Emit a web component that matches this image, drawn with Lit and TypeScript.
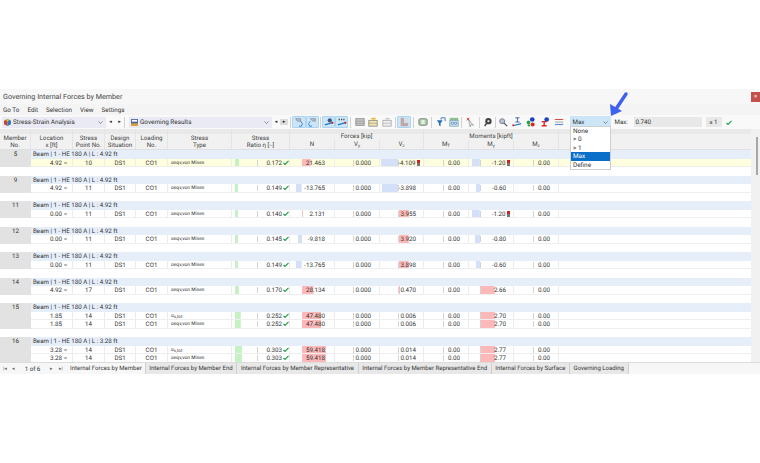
import { LitElement, html, css, svg } from 'lit';
import { customElement } from 'lit/decorators.js';

type Row = {
  loc: string; approx: boolean; pt: string; type: string; ratio: string;
  n: string; vz: string; vzFlag?: boolean; my: string; myFlag?: boolean;
};
type Group = { no: string; len: string; yellow?: boolean; rows: Row[] };

const VM = 'von';
const TOT = 'tot';

const groups: Group[] = [
  { no: '5', len: '4.92', yellow: true, rows: [{ loc: '4.92', approx: true, pt: '10', type: VM, ratio: '0.172', n: '21.463', vz: '-4.109', vzFlag: true, my: '-1.20', myFlag: true }] },
  { no: '9', len: '4.92', rows: [{ loc: '4.92', approx: true, pt: '11', type: VM, ratio: '0.149', n: '-13.765', vz: '-3.898', my: '-0.60' }] },
  { no: '11', len: '4.92', rows: [{ loc: '0.00', approx: true, pt: '11', type: VM, ratio: '0.140', n: '2.131', vz: '3.955', my: '-1.20', myFlag: true }] },
  { no: '12', len: '4.92', rows: [{ loc: '0.00', approx: true, pt: '11', type: VM, ratio: '0.145', n: '-9.818', vz: '3.920', my: '-0.80' }] },
  { no: '13', len: '4.92', rows: [{ loc: '0.00', approx: true, pt: '11', type: VM, ratio: '0.149', n: '-13.765', vz: '3.898', my: '-0.60' }] },
  { no: '14', len: '4.92', rows: [{ loc: '4.92', approx: true, pt: '17', type: VM, ratio: '0.170', n: '28.134', vz: '0.470', my: '2.66' }] },
  { no: '15', len: '4.92', rows: [
    { loc: '1.85', approx: false, pt: '14', type: TOT, ratio: '0.252', n: '47.480', vz: '0.006', my: '2.70' },
    { loc: '1.85', approx: false, pt: '14', type: VM, ratio: '0.252', n: '47.480', vz: '0.006', my: '2.70' },
  ] },
  { no: '16', len: '3.28', rows: [
    { loc: '3.28', approx: true, pt: '14', type: TOT, ratio: '0.303', n: '59.418', vz: '0.014', my: '2.77' },
    { loc: '3.28', approx: true, pt: '14', type: VM, ratio: '0.303', n: '59.418', vz: '0.014', my: '2.77' },
  ] },
];

const tabs = [
  'Internal Forces by Member',
  'Internal Forces by Member End',
  'Internal Forces by Member Representative',
  'Internal Forces by Member Representative End',
  'Internal Forces by Surface',
  'Governing Loading',
];

// signed bar around a zero line: red to the right, blue to the left
function bar(value: number, zero: number, scalePos: number, scaleNeg: number) {
  const w = value >= 0 ? value * scalePos : -value * scaleNeg;
  const left = value >= 0 ? zero : zero - w;
  const color = value >= 0 ? '#fdb9b9' : '#d3e0f8';
  return `--bx:${left}px;--bw:${w}px;--bc:${color}`;
}

const tool = (body: unknown, cls = '') =>
  html`<span class="tool ${cls}"><svg viewBox="0 0 12 12" width="10" height="10">${body}</svg></span>`;

const check = html`<svg width="6" height="5" viewBox="0 0 6 5"><path d="M.5 3l1.5 1.5L5.5 .8" fill="none" stroke="#1c9a4a" stroke-width="1.1"/></svg>`;

@customElement('app-root')
export class AppRoot extends LitElement {
  static styles = css`
    :host {
      display: block;
      width: 760px;
      height: 463px;
      padding-top: 89px;
      box-sizing: border-box;
      position: relative;
      overflow: hidden;
      background: #fff;
      font-family: Roboto, 'Noto Sans', sans-serif;
      font-size: 6.2px;
      color: #333;
      text-rendering: geometricPrecision;
    }
    .title {
      height: 15px;
      display: flex;
      align-items: center;
      justify-content: space-between;
      background: #f7f7f7;
      padding-left: 3px;
      font-size: 7.2px;
      color: #444;
    }
    .close {
      width: 9px;
      height: 10px;
      background: #c44f4f;
      color: #fff;
      font-size: 6px;
      display: flex;
      align-items: center;
      justify-content: center;
    }
    .menu {
      height: 11px;
      display: flex;
      align-items: center;
      gap: 8px;
      padding-left: 3px;
      background: #f4f4f4;
      font-size: 6.3px;
    }
    .toolbar {
      height: 14px;
      display: flex;
      align-items: center;
      background: #f9f9f9;
      white-space: nowrap;
    }
    .combo {
      height: 11px;
      display: flex;
      align-items: center;
      gap: 2.5px;
      background: #e9eaf3;
      padding: 0 3px 0 1.5px;
      box-sizing: border-box;
      font-size: 6.4px;
    }
    .combo.first { width: 104px; margin-left: 2px; }
    .combo.second { width: 143px; }
    .combo .grow { flex: 1; }
    .chev { display: block; }
    .step { width: 9px; text-align: center; font-size: 5px; color: #222; }
    .step.small { width: 8px; }
    .step.hot { background: #ddd; }
    .sep { width: 1px; height: 11px; background: #d2d2d2; flex: none; }
    .s0 { margin: 0 4px 0 0; }
    .s1 { margin: 0 1px 0 2px; }
    .s2 { margin: 0 1px; }
    .s3 { margin: 0 2.5px 0 1.5px; }
    .s4 { margin: 0 1.5px 0 1px; }
    .s5 { margin: 0 2.5px; }
    .s6 { margin: 0 2px 0 1.5px; }
    .s7 { margin: 0 2px 0 1px; }
    .s8 { margin: 0 1.5px 0 2px; }
    .tool {
      width: 13px;
      height: 12px;
      display: flex;
      align-items: center;
      justify-content: center;
      box-sizing: border-box;
      flex: none;
    }
    .tool.w { width: 13.5px; }
    .tool.x { width: 14px; }
    .tool.on { background: #cde6f7; border: 1px solid #a9d4f2; border-radius: 1px; }
    .maxcombo {
      width: 41px;
      height: 12px;
      margin-left: 4px;
      background: #cde6f7;
      display: flex;
      align-items: center;
      justify-content: space-between;
      padding: 0 3px;
      box-sizing: border-box;
      flex: none;
    }
    .maxlabel { margin-left: 4px; width: 19px; flex: none; }
    .maxval {
      width: 68px;
      height: 10px;
      padding-left: 2px;
      background: #e8e8e8;
      line-height: 10px;
      box-sizing: border-box;
      flex: none;
    }
    .le { width: 16px; height: 10px; margin-left: 4px; background: #e8e8e8; text-align: center; line-height: 10px; flex: none; }
    .ok { margin-left: 4px; display: flex; }

    .body { display: flex; height: 233px; }
    .table { width: 751px; overflow: hidden; }
    .scroll { width: 9px; background: #f1f1f1; padding-top: 8px; box-sizing: border-box; }
    .thumb { width: 2px; height: 38px; margin-left: 5px; background: #a8a8a8; }

    .head {
      height: 21px;
      background: linear-gradient(#e9e9e9 0 5px, #f1f1f1 5px);
      border-bottom: 1px solid #e0e0e0;
      box-sizing: border-box;
      display: grid;
      grid-template-columns: 31px 42px 32px 31px 32px 64px 58px 45px 45px 44px 45px 45px 45px 192px;
      grid-template-rows: 11px 9px;
      text-align: center;
      line-height: 7.5px;
      color: #444;
    }
    .h2 {
      grid-row: span 2;
      display: flex;
      align-items: center;
      justify-content: center;
      border-right: 1px solid #e4e4e4;
      padding-top: 6px;
      box-sizing: border-box;
    }
    .hspan { grid-column: span 3; border-right: 1px solid #e4e4e4; padding-top: 4px; box-sizing: border-box; }
    .hsub { border-right: 1px solid #e4e4e4; padding-top: 1px; box-sizing: border-box; }
    .hrest { grid-row: span 2; }
    sub { font-size: 4.5px; line-height: 0; vertical-align: -1px; }

    .group { display: flex; padding-bottom: 8.5px; }
    .no {
      width: 31px;
      background: #e2e2e2;
      text-align: center;
      line-height: 8px;
      flex: none;
    }
    .rows { flex: 1; min-width: 0; }
    .beam {
      height: 8.5px;
      line-height: 9px;
      background: #e6eefa;
      padding-left: 2px;
    }
    .data {
      height: 8.5px;
      line-height: 9.5px;
      display: grid;
      grid-template-columns: 42px 32px 31px 32px 64px 58px 45px 45px 44px 45px 45px 45px 192px;
      background: #fff;
      border-bottom: 1px solid #eeeeee;
      box-sizing: border-box;
    }
    .yellow .data { background: #ffffe0; }
    .c { border-right: 1px solid #ececec; box-sizing: border-box; white-space: nowrap; overflow: hidden; }
    .ctr { text-align: center; }
    .loc { text-align: right; padding-right: 3px; }
    .type { padding-left: 3px; font-size: 4.9px; }
    .num {
      --z: -2px;
      --bx: 0;
      --bw: 0;
      --bc: transparent;
      text-align: right;
      padding-right: 8px;
      background:
        linear-gradient(#d4d4d4, #d4d4d4) var(--z) 1px / 1px 6px no-repeat,
        linear-gradient(var(--bc), var(--bc)) var(--bx) 0 / var(--bw) 100% no-repeat;
    }
    .z25 { --z: 25px; padding-right: 0; }
    .z18 { --z: 18px; }
    .z19 { --z: 19px; }
    .z11 { --z: 11px; }
    .pad9 { padding-right: 9px; }
    .pad7 { padding-right: 7px; }
    .pad3 { padding-right: 3px; }
    .approx { display: inline-block; width: 7px; text-align: center; color: #777; }
    .flag {
      display: inline-block;
      width: 3px;
      height: 6px;
      margin-left: 1.5px;
      vertical-align: -1px;
      background: linear-gradient(#cc2222 0 55%, #777 55%);
    }
    .check { display: inline-block; width: 7px; padding-left: 1px; box-sizing: border-box; }

    .tabs {
      height: 11px;
      display: flex;
      align-items: stretch;
      background: #f7f7f7;
      border-top: 1px solid #dcdcdc;
      white-space: nowrap;
      font-size: 6.05px;
    }
    .pager { width: 67px; display: flex; align-items: center; color: #666; font-size: 5px; padding-left: 3px; box-sizing: border-box; flex: none; }
    .pager span { width: 9px; flex: none; }
    .pager b { font-weight: 400; font-size: 6.2px; color: #333; width: 29px; text-align: center; flex: none; padding-right: 6px; box-sizing: border-box; }
    .tab { padding: 0 3.6px; background: #e8e8e8; border-right: 1px solid #cfcfcf; display: flex; align-items: center; }
    .tab.active { background: #f7f7f7; padding: 0 3px 0 3px; }

    .drop {
      position: absolute;
      left: 570px;
      top: 126px;
      width: 41px;
      background: #fff;
      border: 1px solid #cfcfcf;
      box-sizing: border-box;
      z-index: 2;
      font-size: 6.4px;
    }
    .drop div { height: 8.4px; line-height: 8.4px; padding-left: 2px; }
    .drop .sel { background: #0a6fc9; color: #fff; }
    .arrow { position: absolute; left: 605px; top: 90px; z-index: 3; }
  `;

  renderRow(r: Row) {
    const n = parseFloat(r.n);
    const vz = parseFloat(r.vz);
    const my = parseFloat(r.my);
    const ratio = parseFloat(r.ratio);
    const g = `--bx:3px;--bw:${ratio * 23}px;--bc:#c4f2c4`;
    return html`<div class="data">
      <div class="c loc">${r.loc}<span class="approx">${r.approx ? '≈' : ''}</span></div>
      <div class="c ctr">${r.pt}</div>
      <div class="c ctr">DS1</div>
      <div class="c ctr">CO1</div>
      <div class="c type">${r.type === VM ? 'σeqv,von Mises' : html`σ<sub>x,tot</sub>`}</div>
      <div class="c num z25" style=${g}>${r.ratio}<span class="check">${check}</span></div>
      <div class="c num pad9" style=${bar(n, 12, 0.41, 0.41)}>${r.n}</div>
      <div class="c num z18">0.000</div>
      <div class="c num z18 ${r.vzFlag ? 'pad3' : 'pad7'}" style=${bar(vz, 18.5, 2.5, 4.14)}>${r.vz}${r.vzFlag ? html`<span class="flag"></span>` : ''}</div>
      <div class="c num z19">0.00</div>
      <div class="c num z11 ${r.myFlag ? 'pad3' : 'pad7'}" style=${bar(my, 11, 5.5, 6.5)}>${r.my}${r.myFlag ? html`<span class="flag"></span>` : ''}</div>
      <div class="c num z19">0.00</div>
      <div></div>
    </div>`;
  }

  render() {
    const chev = html`<svg class="chev" width="5" height="3" viewBox="0 0 5 3"><path d="M.5 .5L2.5 2.5 4.5 .5" fill="none" stroke="#666" stroke-width=".7"/></svg>`;
    return html`
      <div class="title"><span>Governing Internal Forces by Member</span><span class="close">×</span></div>
      <div class="menu"><span>Go To</span><span>Edit</span><span>Selection</span><span>View</span><span>Settings</span></div>
      <div class="toolbar">
        <div class="combo first">
          <svg width="7" height="7" viewBox="0 0 8 8"><path d="M0 2l4-2v8L0 6z" fill="#c8452f"/><path d="M4 0l4 2v4L4 8z" fill="#2f78c8"/><path d="M2 1l2-1 2 1-2 2z" fill="#e8c030"/></svg>
          <span>Stress-Strain Analysis</span><span class="grow"></span>${chev}
        </div>
        <span class="step">◂</span><span class="step">▸</span><span class="sep s0"></span>
        <div class="combo second">
          <svg width="7" height="7" viewBox="0 0 8 8"><rect width="8" height="8" fill="#4a6a9a"/><rect x="1" y="1" width="6" height="2" fill="#fff"/><rect y="5" width="8" height="3" fill="#d8a040"/></svg>
          <span>Governing Results</span><span class="grow"></span>${chev}
        </div>
        <span class="step small">◂</span><span class="step small hot">▸</span><span class="sep s1"></span>

        ${tool(svg`<path d="M2 2h6v3H4z" fill="#b8c4d0" stroke="#6a7a8c" stroke-width=".7"/><path d="M8 5l2 3-1 3H6" fill="none" stroke="#1f7ad0"/>`, 'w on')}
        ${tool(svg`<path d="M4 2h6v3H7z" fill="#b8c4d0" stroke="#6a7a8c" stroke-width=".7"/><path d="M4 5L2 8l1 3h3" fill="none" stroke="#1f7ad0"/>`, 'w on')}
        <span class="sep s2"></span>
        ${tool(svg`<circle cx="7" cy="4" r="2.6" fill="#3d5a80"/><path d="M1 9.5l10-3" stroke="#1f7ad0" stroke-width="1.4"/><circle cx="10" cy="7" r="1.3" fill="#d22"/>`, 'on')}
        ${tool(svg`<path d="M2 3h8" stroke="#444" stroke-dasharray="1.4 1.4" stroke-width="2"/><path d="M1 9.5l10-3" stroke="#1f7ad0" stroke-width="1.4"/><circle cx="10" cy="7" r="1.3" fill="#d22"/>`, 'on')}
        <span class="sep s3"></span>
        ${tool(svg`<rect x="1" y="2" width="10" height="8" fill="#c8c8c8" stroke="#8a8a8a"/><path d="M1 5h10M1 7.5h10" stroke="#8a8a8a" stroke-width=".7"/>`, 'w')}
        ${tool(svg`<rect x="1" y="4" width="10" height="7" fill="#f5e6a8" stroke="#8a8a8a"/><path d="M1 7.5h10" stroke="#8a8a8a" stroke-width=".7"/><rect x="4" y="1" width="5" height="2" fill="#e8b820"/>`, 'w')}
        ${tool(svg`<rect x="1" y="4" width="10" height="7" fill="#eee" stroke="#aaa"/><path d="M1 7.5h10" stroke="#aaa" stroke-width=".7"/><rect x="4" y="1" width="5" height="2" fill="#ccc"/>`, 'w')}
        <span class="sep s4"></span>
        ${tool(svg`<path d="M2 1h4v6h5v4H2z" fill="#c0a8a8"/><path d="M6 1h5v6H6z" fill="#d4dce4"/>`, 'w on')}
        <span class="sep s5"></span>
        ${tool(svg`<rect x="1" y="2" width="10" height="8" rx="2" fill="#a8cca8" stroke="#777"/><rect x="4" y="3.5" width="4" height="5" fill="#e4f0e4"/>`)}
        <span class="sep s6"></span>
        ${tool(svg`<path d="M1 4h7L5.5 7.5V11L3.5 10V7.5z" fill="#2a6fb8"/><path d="M6 3V1h5v4" fill="none" stroke="#2a6fb8"/>`)}
        ${tool(svg`<rect x="1" y="1" width="10" height="3" fill="#8cc08c"/><rect x="1" y="4" width="10" height="7" fill="#dde9f5" stroke="#7aa"/><circle cx="4" cy="7.5" r="1.5" fill="none" stroke="#2a6fb8" stroke-width=".8"/><circle cx="8" cy="7.5" r="1.5" fill="none" stroke="#2a6fb8" stroke-width=".8"/>`)}
        <span class="sep s7"></span>
        ${tool(svg`<path d="M3 3l6 7-3-1-1 3z" fill="#eee" stroke="#888" stroke-width=".8"/><path d="M1 1l3 3M4 1L1 4" stroke="#d22"/>`)}
        <span class="sep s8"></span>
        ${tool(svg`<circle cx="6.5" cy="5" r="3.8" fill="#444"/><circle cx="6.5" cy="5" r="1.3" fill="#ddd"/><path d="M4 8l-2 3" stroke="#444" stroke-width="1.8"/>`)}
        <span class="sep"></span>
        ${tool(svg`<circle cx="5" cy="5" r="3" fill="#b6c4dc" stroke="#667" stroke-width=".9"/><path d="M7 7l4 4" stroke="#556" stroke-width="1.5"/>`, 'x')}
        ${tool(svg`<path d="M4 1h5M6.5 1v5M4 6h5" stroke="#2a4f8f"/><path d="M1 10.5l10-2.5" stroke="#1f7ad0" stroke-width="1.4"/><circle cx="1.5" cy="10" r="1.2" fill="#d22"/>`, 'x')}
        ${tool(svg`<circle cx="7.5" cy="3" r="2.8" fill="#1f3fc8"/><circle cx="3" cy="6.5" r="2.2" fill="#2aa24a"/><circle cx="8" cy="9" r="2.4" fill="#d22"/><circle cx="3.5" cy="10" r="1.4" fill="#2aa24a"/>`, 'x')}
        ${tool(svg`<circle cx="8" cy="3" r="2.8" fill="#1f3fc8"/><path d="M2 5.5h6M5 5.5v5M2 10.5h6" stroke="#d22" stroke-width="1.6"/>`, 'x')}
        ${tool(svg`<path d="M1 3h10" stroke="#d22"/><path d="M1 6h10" stroke="#999"/><path d="M1 9.5c3-2 6 1 10-1" stroke="#1f5fc8" fill="none"/>`, 'x')}
        <div class="maxcombo"><span>Max</span>${chev}</div>
        <span class="maxlabel">Max:</span>
        <span class="maxval">0.740</span>
        <span class="le">≤ 1</span>
        <span class="ok">${check}</span>
      </div>
      <div class="body">
        <div class="table">
          <div class="head">
            <div class="h2">Member<br />No.</div>
            <div class="h2">Location<br />x [ft]</div>
            <div class="h2">Stress<br />Point No.</div>
            <div class="h2">Design<br />Situation</div>
            <div class="h2">Loading<br />No.</div>
            <div class="h2">Stress<br />Type</div>
            <div class="h2">Stress<br />Ratio η [--]</div>
            <div class="hspan">Forces [kip]</div>
            <div class="hspan">Moments [kipft]</div>
            <div class="hrest"></div>
            <div class="hsub">N</div>
            <div class="hsub">V<sub>y</sub></div>
            <div class="hsub">V<sub>z</sub></div>
            <div class="hsub">M<sub>T</sub></div>
            <div class="hsub">M<sub>y</sub></div>
            <div class="hsub">M<sub>z</sub></div>
          </div>
          ${groups.map(g => html`
            <div class="group ${g.yellow ? 'yellow' : ''}">
              <div class="no">${g.no}</div>
              <div class="rows">
                <div class="beam">Beam | 1 - HE 180 A | L : ${g.len} ft</div>
                ${g.rows.map(r => this.renderRow(r))}
              </div>
            </div>`)}
        </div>
        <div class="scroll"><div class="thumb"></div></div>
      </div>
      <div class="tabs">
        <div class="pager"><span>|◂</span><span>◂</span><b>1 of 6</b><span>▸</span><span>▸|</span></div>
        ${tabs.map((t, i) => html`<div class="tab ${i === 0 ? 'active' : ''}">${t}</div>`)}
      </div>
      <div class="drop">
        <div>None</div><div>&gt; 0</div><div>&gt; 1</div><div class="sel">Max</div><div>Define</div>
      </div>
      <svg class="arrow" width="26" height="28" viewBox="0 0 26 28">
        <path d="M21 4L11 19" stroke="#3f62ee" stroke-width="3.4" stroke-linecap="round"/>
        <path d="M6 26L5 14l12 7z" fill="#3f62ee"/>
      </svg>
    `;
  }
}
